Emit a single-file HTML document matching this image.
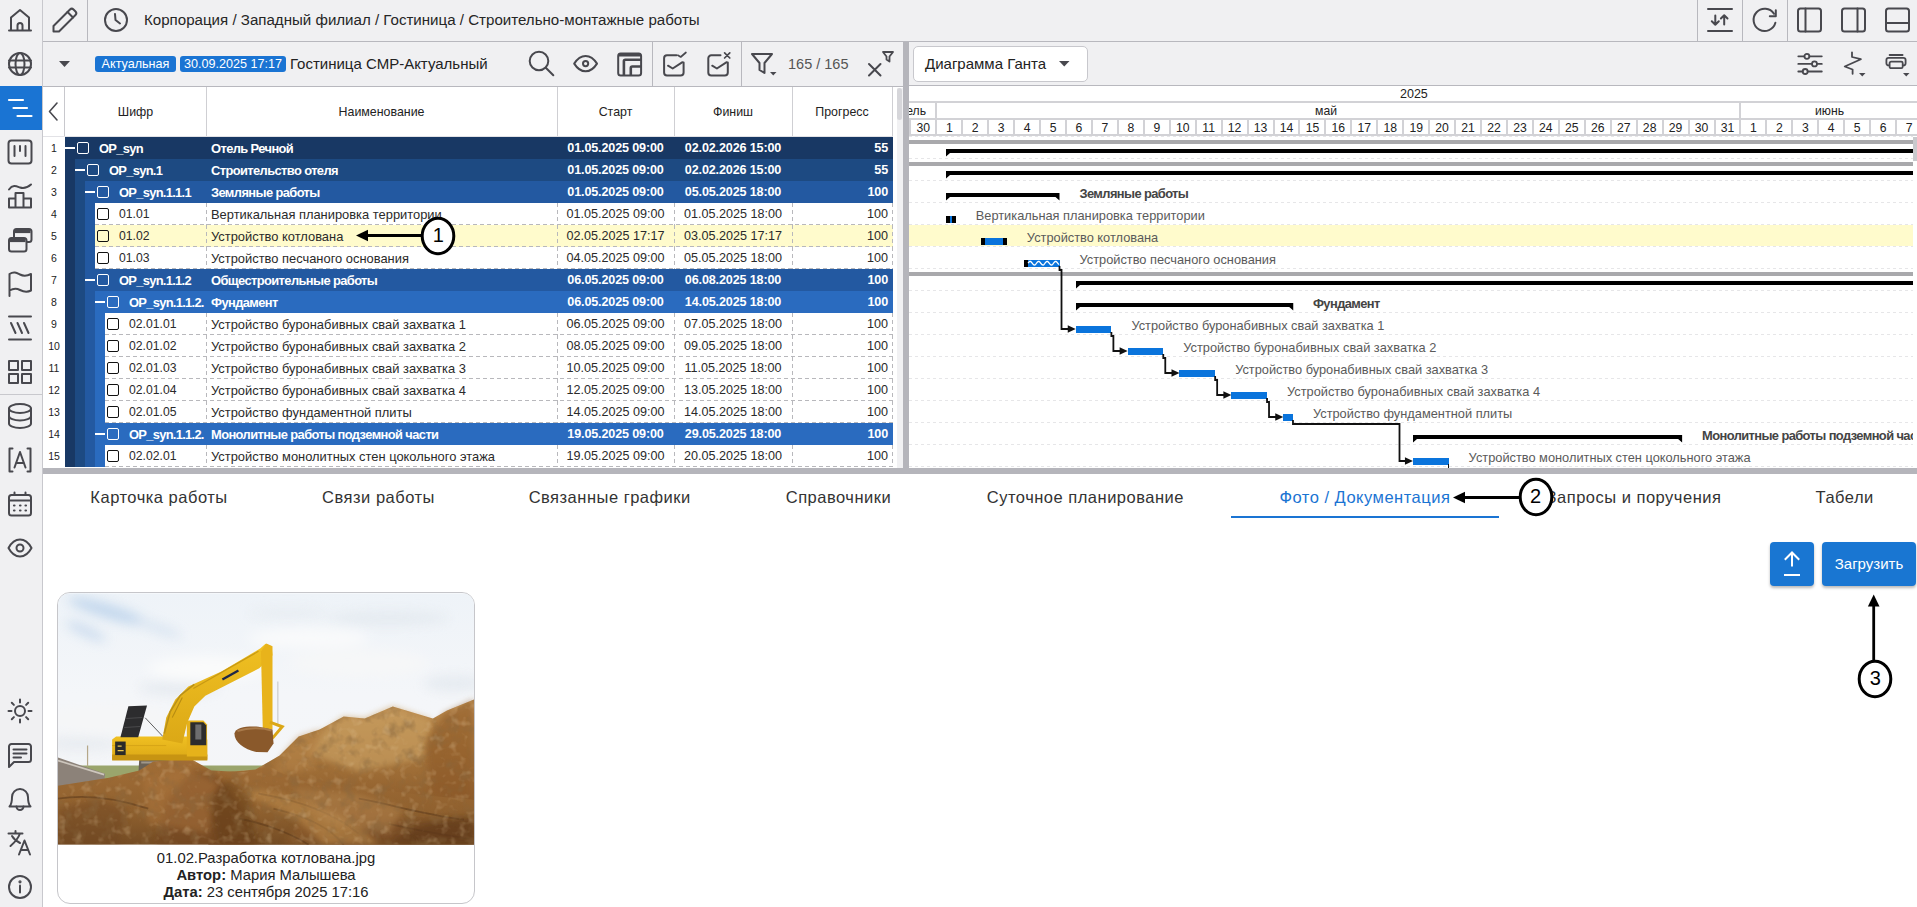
<!DOCTYPE html>
<html><head><meta charset="utf-8">
<style>
*{box-sizing:border-box;margin:0;padding:0}
html,body{width:1917px;height:907px;overflow:hidden;background:#fff;font-family:"Liberation Sans",sans-serif;color:#222}
.a{position:absolute}
svg{position:absolute;overflow:visible}
.ic{fill:none;stroke:#48484e;stroke-width:2;stroke-linecap:round;stroke-linejoin:round}
.t{position:absolute;white-space:nowrap}
</style></head><body>

<div class="a" style="left:0px;top:0px;width:42px;height:907px;background:#f0f0f2"></div>
<div class="a" style="left:42px;top:0px;width:1px;height:907px;background:#c8c8cd"></div>
<div class="a" style="left:0px;top:86px;width:42px;height:44px;background:#1a74d3"></div>
<div class="a" style="left:0px;top:394px;width:42px;height:1px;background:#c8c8cd"></div>
<svg class="ic" style="left:8px;top:8px;stroke:#48484e;stroke-width:2" width="24" height="24" viewBox="0 0 24 24"><path d="M1 22.5H23"/><path d="M3 22V9.5L12 2L21 9.5V22"/><path d="M9.5 22V17.5A2.5 2.5 0 0 1 14.5 17.5V22"/></svg>
<svg class="ic" style="left:8px;top:52px;stroke:#48484e;stroke-width:2" width="24" height="24" viewBox="0 0 24 24"><circle cx="12" cy="12" r="11"/><path d="M1 8.5H23M1 15.5H23"/><ellipse cx="12" cy="12" rx="4.5" ry="11"/></svg>
<svg class="ic" style="left:8px;top:96px;stroke:#fff;stroke-width:2.2" width="24" height="24" viewBox="0 0 24 24"><path d="M1 4H15M5.5 12H19M9.5 20H23.5"/></svg>
<svg class="ic" style="left:8px;top:140px;stroke:#48484e;stroke-width:2" width="24" height="24" viewBox="0 0 24 24"><rect x="0.5" y="0.5" width="23" height="23" rx="3"/><path d="M6.5 6V16M12 6V11M17.5 6V16"/></svg>
<svg class="ic" style="left:8px;top:184px;stroke:#48484e;stroke-width:2" width="24" height="24" viewBox="0 0 24 24"><path d="M1 5.5C5 0 9 2.5 12 3.5S19 4 23 0.5"/><path d="M1 23.5V14.5H7.5V23.5ZM7.5 23.5V9H15.5V23.5ZM15.5 23.5V14.5H23V23.5ZM1 23.5H23"/></svg>
<svg class="ic" style="left:8px;top:228px;stroke:#48484e;stroke-width:2" width="24" height="24" viewBox="0 0 24 24"><rect x="6" y="1" width="17.5" height="13" rx="2.5"/><path d="M7 3.5H22.5" style="stroke-width:3.2;stroke-linecap:butt"/><rect x="1" y="10" width="17.5" height="13.5" rx="2.5" style="fill:#f0f0f2"/><path d="M2 12.5H17.5" style="stroke-width:3.2;stroke-linecap:butt"/></svg>
<svg class="ic" style="left:8px;top:272px;stroke:#48484e;stroke-width:2" width="24" height="24" viewBox="0 0 24 24"><path d="M1.5 24V2C6 -1 9 1 12 2.5S19 4 23 2V18.5C19 20.5 15 19.5 12 18S6 16 1.5 18.5"/></svg>
<svg class="ic" style="left:8px;top:316px;stroke:#48484e;stroke-width:2" width="24" height="24" viewBox="0 0 24 24"><path d="M1 0.5H23M1 23.5H23M3 7L7.5 17M9.5 7L14 17M16 7L20.5 17"/></svg>
<svg class="ic" style="left:8px;top:360px;stroke:#48484e;stroke-width:2" width="24" height="24" viewBox="0 0 24 24"><rect x="1" y="1" width="9" height="9"/><rect x="14" y="1" width="9" height="9"/><rect x="1" y="14" width="9" height="9"/><rect x="14" y="14" width="9" height="9"/></svg>
<svg class="ic" style="left:8px;top:404px;stroke:#48484e;stroke-width:2" width="24" height="24" viewBox="0 0 24 24"><ellipse cx="12" cy="4.5" rx="11" ry="4.5"/><path d="M1 4.5V19.5C1 22 6 24 12 24S23 22 23 19.5V4.5M1 12C1 14.5 6 16.5 12 16.5S23 14.5 23 12"/></svg>
<svg class="ic" style="left:8px;top:448px;stroke:#48484e;stroke-width:2" width="24" height="24" viewBox="0 0 24 24"><path d="M4.5 0.5H1.5V23.5H4.5M19.5 0.5H22.5V23.5H19.5M6.5 19.5L12 4L17.5 19.5M8 15H16"/></svg>
<svg class="ic" style="left:8px;top:492px;stroke:#48484e;stroke-width:2" width="24" height="24" viewBox="0 0 24 24"><rect x="1" y="3" width="22" height="20.5" rx="2.5"/><path d="M1 8.5H23M6.5 0.5V3M17.5 0.5V3"/><path d="M6 13.5h0.5M12 13.5h0.5M17.5 13.5h0.5M6 18.5h0.5M12 18.5h0.5M17.5 18.5h0.5" style="stroke-width:2.2"/></svg>
<svg class="ic" style="left:8px;top:536px;stroke:#48484e;stroke-width:2" width="24" height="24" viewBox="0 0 24 24"><path d="M0.5 12C4 5.5 8 3.5 12 3.5S20 5.5 23.5 12C20 18.5 16 20.5 12 20.5S4 18.5 0.5 12Z"/><circle cx="12" cy="12" r="3.5"/></svg>
<svg class="ic" style="left:8px;top:699px;stroke:#48484e;stroke-width:2" width="24" height="24" viewBox="0 0 24 24"><circle cx="12" cy="12" r="5"/><path d="M12 0.5V3.5M12 20.5V23.5M0.5 12H3.5M20.5 12H23.5M3.8 3.8L5.9 5.9M18.1 18.1L20.2 20.2M3.8 20.2L5.9 18.1M18.1 5.9L20.2 3.8"/></svg>
<svg class="ic" style="left:8px;top:743px;stroke:#48484e;stroke-width:2" width="24" height="24" viewBox="0 0 24 24"><path d="M1 24V3.5A2.5 2.5 0 0 1 3.5 1H20.5A2.5 2.5 0 0 1 23 3.5V16.5A2.5 2.5 0 0 1 20.5 19H6Z"/><path d="M5.5 6.5H18.5M5.5 10.5H18.5M5.5 14.5H13"/></svg>
<svg class="ic" style="left:8px;top:787px;stroke:#48484e;stroke-width:2" width="24" height="24" viewBox="0 0 24 24"><path d="M1.5 19.5H22.5C20 17 20 14 20 10A8 8 0 0 0 4 10C4 14 4 17 1.5 19.5Z"/><path d="M8.5 19.5A3.5 3.5 0 0 0 15.5 19.5"/></svg>
<svg class="ic" style="left:8px;top:831px;stroke:#48484e;stroke-width:2" width="24" height="24" viewBox="0 0 24 24"><path d="M0.5 2.5H14.5M7.5 0V2.5M12 2.5C10 8 6 12 2.5 15M4 5C6 8.5 9 10.5 12 12M11 23.5L16.5 9.5L22 23.5M13 19H20"/></svg>
<svg class="ic" style="left:8px;top:875px;stroke:#48484e;stroke-width:2" width="24" height="24" viewBox="0 0 24 24"><circle cx="12" cy="12" r="11"/><path d="M12 10.5V17.5"/><circle cx="12" cy="6.8" r="0.6" style="fill:#48484e"/></svg>
<div class="a" style="left:43px;top:0px;width:1874px;height:41px;background:#f0f0f2"></div>
<div class="a" style="left:43px;top:41px;width:1874px;height:1px;background:#b8b8be"></div>
<div class="a" style="left:87px;top:0px;width:1px;height:41px;background:#b8b8be"></div>
<svg class="ic" style="left:52px;top:7px;" width="26" height="26" viewBox="0 0 26 26"><path d="M1.5 24.5V19L18 2.5A2.5 2.5 0 0 1 21.5 2.5L23.5 4.5A2.5 2.5 0 0 1 23.5 8L7 24.5Z"/><path d="M15.5 5L21 10.5"/></svg>
<svg class="ic" style="left:104px;top:8px;" width="24" height="24" viewBox="0 0 24 24"><circle cx="12" cy="12" r="11"/><path d="M11 6L11.5 12L16 15.5"/></svg>
<div class="t" style="left:144px;top:11px;font-size:15.1px;color:#262626;line-height:18px">Корпорация / Западный филиал / Гостиница / Строительно-монтажные работы</div>
<div class="a" style="left:1697px;top:0px;width:1px;height:41px;background:#b8b8be"></div>
<div class="a" style="left:1742px;top:0px;width:1px;height:41px;background:#b8b8be"></div>
<div class="a" style="left:1787px;top:0px;width:1px;height:41px;background:#b8b8be"></div>
<svg class="ic" style="left:1707px;top:8px;" width="26" height="24" viewBox="0 0 26 24"><path d="M1 1H25M1 23H25M8.3 7.5V16.8M4.8 13.3L8.3 16.8L11.8 13.3M17.2 16.6V7.2M13.9 10.5L17.2 7.2L20.5 10.5"/></svg>
<svg class="ic" style="left:1752px;top:7px;" width="26" height="26" viewBox="0 0 26 26"><path d="M23.4 15.8A11.1 11.1 0 1 1 22 6.8"/><path d="M23.8 3.2V9.2H17.8"/></svg>
<svg class="ic" style="left:1797px;top:8px;" width="25" height="24" viewBox="0 0 25 24"><rect x="1" y="0.5" width="23" height="23" rx="2.5"/><path d="M8.5 0.5V23.5"/></svg>
<svg class="ic" style="left:1841px;top:8px;" width="25" height="24" viewBox="0 0 25 24"><rect x="1" y="0.5" width="23" height="23" rx="2.5"/><path d="M16.5 0.5V23.5"/></svg>
<svg class="ic" style="left:1885px;top:8px;" width="25" height="24" viewBox="0 0 25 24"><rect x="1" y="0.5" width="23" height="23" rx="2.5"/><path d="M1 15H24"/></svg>
<div class="a" style="left:43px;top:42px;width:860px;height:44px;background:#f0f0f2"></div>
<div class="a" style="left:43px;top:86px;width:860px;height:1px;background:#b8b8be"></div>
<div class="a" style="left:652px;top:42px;width:1px;height:44px;background:#b8b8be"></div>
<div class="a" style="left:741px;top:42px;width:1px;height:44px;background:#b8b8be"></div>
<svg style="left:59px;top:61px" width="12" height="7" viewBox="0 0 12 7"><path d="M0 0H11L5.5 6Z" fill="#48484e"/></svg>
<div class="t" style="left:95px;top:56px;height:16px;width:81px;background:#1a74d3;border-radius:3px;color:#fff;font-size:12.6px;line-height:16px;text-align:center">Актуальная</div>
<div class="t" style="left:180px;top:56px;height:16px;width:106px;background:#1a74d3;border-radius:3px;color:#fff;font-size:12.6px;line-height:16px;text-align:center">30.09.2025 17:17</div>
<div class="t" style="left:290px;top:55px;font-size:15px;color:#222;line-height:18px">Гостиница СМР-Актуальный</div>
<svg class="ic" style="left:528px;top:50px;" width="27" height="27" viewBox="0 0 27 27"><circle cx="11" cy="11" r="9.3"/><path d="M17.8 17.8L25.3 25.3"/></svg>
<svg class="ic" style="left:573px;top:53px;" width="26" height="20" viewBox="0 0 26 20"><path d="M1.2 10.6C4.5 5.3 8.5 2.9 12.6 2.9S20.7 5.3 24 10.6C20.7 15.9 16.7 18.3 12.6 18.3S4.5 15.9 1.2 10.6Z"/><circle cx="12.6" cy="10.6" r="2.6"/></svg>
<svg class="ic" style="left:617px;top:52px;" width="26" height="25" viewBox="0 0 26 25"><rect x="1.2" y="1.5" width="22.9" height="22" rx="2.5"/><path d="M1.5 3H23.8" style="stroke-width:3;stroke-linecap:butt"/><path d="M6.9 23.5V9.2A1.5 1.5 0 0 1 8.4 7.7H24" style="stroke-width:2.6;stroke-linecap:butt"/><path d="M13.8 23.5V16A1.5 1.5 0 0 1 15.3 14.5H24" style="stroke-width:2.6;stroke-linecap:butt"/></svg>
<svg class="ic" style="left:663px;top:51px;" width="24" height="26" viewBox="0 0 24 26"><path d="M13.5 4.3H4A3 3 0 0 0 1.1 7.3V21.4A3 3 0 0 0 4 24.4H17.6A3 3 0 0 0 20.6 21.4V11.5"/><path d="M5 14.7L9.7 17.5L19.5 11.2"/><path d="M14.9 4.3L17.7 6L22.9 1.5" style="stroke-width:1.7"/></svg>
<svg class="ic" style="left:707px;top:51px;" width="25" height="26" viewBox="0 0 25 26"><path d="M13.5 4.3H4.3A3 3 0 0 0 1.3 7.3V21.4A3 3 0 0 0 4.3 24.4H17.8A3 3 0 0 0 20.8 21.4V11.5"/><path d="M5.2 14.7L9.9 17.5L19.7 11.2"/><path d="M17.6 1.8L22.8 7M22.8 1.8L17.6 7" style="stroke-width:1.7"/></svg>
<svg class="ic" style="left:751px;top:53px;" width="23" height="21" viewBox="0 0 23 21"><path d="M1 1H21L13.5 10V20L8.5 17V10Z"/></svg>
<svg style="left:770px;top:72px" width="7" height="4" viewBox="0 0 7 4"><path d="M0 0H6.5L3.25 3.5Z" fill="#48484e"/></svg>
<div class="t" style="left:788px;top:55px;font-size:14.5px;color:#555;line-height:18px">165 / 165</div>
<svg class="ic" style="left:868px;top:63px;" width="14" height="14" viewBox="0 0 14 14"><path d="M1 1L12.5 12.5M12.5 1L1 12.5"/></svg>
<svg class="ic" style="left:882px;top:51px;stroke-width:1.8" width="12" height="12" viewBox="0 0 12 12"><path d="M1 1H11L7.5 5.5V10.5L4.5 8.5V5.5Z"/></svg>
<div class="a" style="left:43px;top:87px;width:850px;height:50px;background:#fff"></div>
<div class="a" style="left:64px;top:87px;width:1px;height:50px;background:#c8c8cd"></div>
<div class="a" style="left:206px;top:87px;width:1px;height:50px;background:#cfcfd3"></div>
<div class="a" style="left:557px;top:87px;width:1px;height:50px;background:#cfcfd3"></div>
<div class="a" style="left:674px;top:87px;width:1px;height:50px;background:#cfcfd3"></div>
<div class="a" style="left:792px;top:87px;width:1px;height:50px;background:#cfcfd3"></div>
<div class="a" style="left:892px;top:87px;width:1px;height:50px;background:#cfcfd3"></div>
<div class="a" style="left:43px;top:136px;width:850px;height:1px;background:#e2e2e6"></div>
<svg class="ic" style="left:48px;top:102px;stroke-width:1.6" width="10" height="19" viewBox="0 0 10 19"><path d="M9 1L1.5 9.5L9 18"/></svg>
<div class="t" style="left:65px;top:105px;width:141px;font-size:12.4px;color:#222;line-height:14px;text-align:center">Шифр</div>
<div class="t" style="left:206px;top:105px;width:351px;font-size:12.4px;color:#222;line-height:14px;text-align:center">Наименование</div>
<div class="t" style="left:557px;top:105px;width:117px;font-size:12.4px;color:#222;line-height:14px;text-align:center">Старт</div>
<div class="t" style="left:674px;top:105px;width:118px;font-size:12.4px;color:#222;line-height:14px;text-align:center">Финиш</div>
<div class="t" style="left:792px;top:105px;width:100px;font-size:12.4px;color:#222;line-height:14px;text-align:center">Прогресс</div>
<div class="a" style="left:893px;top:87px;width:10px;height:381px;background:#fff"></div>
<div class="a" style="left:897px;top:88px;width:6px;height:380px;background:#f1f1f3"></div>
<div class="a" style="left:897px;top:88px;width:5px;height:32px;background:#d6d6da;border-radius:3px"></div>
<div class="a" style="left:43px;top:137px;width:22px;height:331px;background:#fff"></div>
<div class="t" style="left:43px;top:141px;width:22px;text-align:center;font-size:10.5px;color:#222;line-height:14px">1</div>
<div class="a" style="left:65px;top:137px;width:828px;height:22px;background:#183864"></div>
<div class="a" style="left:65px;top:147px;width:10px;height:2px;background:#fff"></div>
<div class="a" style="left:77px;top:142px;width:12px;height:12px;border:1.5px solid #fff;border-radius:2px"></div>
<div class="t" style="left:99px;top:141px;width:107px;overflow:hidden;font-size:12.9px;line-height:15px;color:#fff;font-weight:bold;letter-spacing:-0.7px">OP_syn</div>
<div class="t" style="left:211px;top:141px;font-size:12.9px;line-height:15px;color:#fff;font-weight:bold;letter-spacing:-0.6px;">Отель Речной</div>
<div class="t" style="left:557px;top:141px;width:117px;text-align:center;font-size:12.6px;line-height:15px;color:#fff;font-weight:bold;letter-spacing:-0.15px;">01.05.2025 09:00</div>
<div class="t" style="left:674px;top:141px;width:118px;text-align:center;font-size:12.6px;line-height:15px;color:#fff;font-weight:bold;letter-spacing:-0.15px;">02.02.2026 15:00</div>
<div class="t" style="left:792px;top:141px;width:96px;text-align:right;font-size:12.6px;line-height:15px;color:#fff;font-weight:bold;letter-spacing:-0.15px;">55</div>
<div class="t" style="left:43px;top:163px;width:22px;text-align:center;font-size:10.5px;color:#222;line-height:14px">2</div>
<div class="a" style="left:65px;top:159px;width:10px;height:22px;background:#183864"></div>
<div class="a" style="left:75px;top:159px;width:818px;height:22px;background:#1d4a82"></div>
<div class="a" style="left:75px;top:169px;width:10px;height:2px;background:#fff"></div>
<div class="a" style="left:87px;top:164px;width:12px;height:12px;border:1.5px solid #fff;border-radius:2px"></div>
<div class="t" style="left:109px;top:163px;width:97px;overflow:hidden;font-size:12.9px;line-height:15px;color:#fff;font-weight:bold;letter-spacing:-0.7px">OP_syn.1</div>
<div class="t" style="left:211px;top:163px;font-size:12.9px;line-height:15px;color:#fff;font-weight:bold;letter-spacing:-0.6px;">Строительство отеля</div>
<div class="t" style="left:557px;top:163px;width:117px;text-align:center;font-size:12.6px;line-height:15px;color:#fff;font-weight:bold;letter-spacing:-0.15px;">01.05.2025 09:00</div>
<div class="t" style="left:674px;top:163px;width:118px;text-align:center;font-size:12.6px;line-height:15px;color:#fff;font-weight:bold;letter-spacing:-0.15px;">02.02.2026 15:00</div>
<div class="t" style="left:792px;top:163px;width:96px;text-align:right;font-size:12.6px;line-height:15px;color:#fff;font-weight:bold;letter-spacing:-0.15px;">55</div>
<div class="t" style="left:43px;top:185px;width:22px;text-align:center;font-size:10.5px;color:#222;line-height:14px">3</div>
<div class="a" style="left:65px;top:181px;width:10px;height:22px;background:#183864"></div>
<div class="a" style="left:75px;top:181px;width:10px;height:22px;background:#1d4a82"></div>
<div class="a" style="left:85px;top:181px;width:808px;height:22px;background:#2359a1"></div>
<div class="a" style="left:85px;top:191px;width:10px;height:2px;background:#fff"></div>
<div class="a" style="left:97px;top:186px;width:12px;height:12px;border:1.5px solid #fff;border-radius:2px"></div>
<div class="t" style="left:119px;top:185px;width:87px;overflow:hidden;font-size:12.9px;line-height:15px;color:#fff;font-weight:bold;letter-spacing:-0.7px">OP_syn.1.1.1</div>
<div class="t" style="left:211px;top:185px;font-size:12.9px;line-height:15px;color:#fff;font-weight:bold;letter-spacing:-0.6px;">Земляные работы</div>
<div class="t" style="left:557px;top:185px;width:117px;text-align:center;font-size:12.6px;line-height:15px;color:#fff;font-weight:bold;letter-spacing:-0.15px;">01.05.2025 09:00</div>
<div class="t" style="left:674px;top:185px;width:118px;text-align:center;font-size:12.6px;line-height:15px;color:#fff;font-weight:bold;letter-spacing:-0.15px;">05.05.2025 18:00</div>
<div class="t" style="left:792px;top:185px;width:96px;text-align:right;font-size:12.6px;line-height:15px;color:#fff;font-weight:bold;letter-spacing:-0.15px;">100</div>
<div class="t" style="left:43px;top:207px;width:22px;text-align:center;font-size:10.5px;color:#222;line-height:14px">4</div>
<div class="a" style="left:65px;top:203px;width:10px;height:22px;background:#183864"></div>
<div class="a" style="left:75px;top:203px;width:10px;height:22px;background:#1d4a82"></div>
<div class="a" style="left:85px;top:203px;width:10px;height:22px;background:#2359a1"></div>
<div class="a" style="left:95px;top:203px;width:798px;height:22px;background:#fff"></div>
<div class="a" style="left:97px;top:208px;width:12px;height:12px;border:1.5px solid #111;border-radius:2px"></div>
<div class="a" style="left:95px;top:224px;width:797px;height:1px;background:repeating-linear-gradient(90deg,#b8b8bc 0 4px,transparent 4px 7px)"></div>
<div class="a" style="left:206px;top:203px;width:1px;height:22px;background:repeating-linear-gradient(180deg,#b8b8bc 0 4px,transparent 4px 7px)"></div>
<div class="a" style="left:557px;top:203px;width:1px;height:22px;background:repeating-linear-gradient(180deg,#b8b8bc 0 4px,transparent 4px 7px)"></div>
<div class="a" style="left:674px;top:203px;width:1px;height:22px;background:repeating-linear-gradient(180deg,#b8b8bc 0 4px,transparent 4px 7px)"></div>
<div class="a" style="left:792px;top:203px;width:1px;height:22px;background:repeating-linear-gradient(180deg,#b8b8bc 0 4px,transparent 4px 7px)"></div>
<div class="a" style="left:892px;top:203px;width:1px;height:22px;background:repeating-linear-gradient(180deg,#b8b8bc 0 4px,transparent 4px 7px)"></div>
<div class="t" style="left:119px;top:207px;font-size:12.2px;line-height:15px;color:#2a2a2a">01.01</div>
<div class="t" style="left:211px;top:207px;font-size:12.9px;line-height:15px;color:#2a2a2a;font-weight:normal;">Вертикальная планировка территории</div>
<div class="t" style="left:557px;top:207px;width:117px;text-align:center;font-size:12.6px;line-height:15px;color:#2a2a2a;font-weight:normal;">01.05.2025 09:00</div>
<div class="t" style="left:674px;top:207px;width:118px;text-align:center;font-size:12.6px;line-height:15px;color:#2a2a2a;font-weight:normal;">01.05.2025 18:00</div>
<div class="t" style="left:792px;top:207px;width:96px;text-align:right;font-size:12.6px;line-height:15px;color:#2a2a2a;font-weight:normal;">100</div>
<div class="t" style="left:43px;top:229px;width:22px;text-align:center;font-size:10.5px;color:#222;line-height:14px">5</div>
<div class="a" style="left:65px;top:225px;width:10px;height:22px;background:#183864"></div>
<div class="a" style="left:75px;top:225px;width:10px;height:22px;background:#1d4a82"></div>
<div class="a" style="left:85px;top:225px;width:10px;height:22px;background:#2359a1"></div>
<div class="a" style="left:95px;top:225px;width:798px;height:22px;background:#fffbcc"></div>
<div class="a" style="left:97px;top:230px;width:12px;height:12px;border:1.5px solid #111;border-radius:2px"></div>
<div class="a" style="left:95px;top:246px;width:797px;height:1px;background:repeating-linear-gradient(90deg,#b8b8bc 0 4px,transparent 4px 7px)"></div>
<div class="a" style="left:206px;top:225px;width:1px;height:22px;background:repeating-linear-gradient(180deg,#b8b8bc 0 4px,transparent 4px 7px)"></div>
<div class="a" style="left:557px;top:225px;width:1px;height:22px;background:repeating-linear-gradient(180deg,#b8b8bc 0 4px,transparent 4px 7px)"></div>
<div class="a" style="left:674px;top:225px;width:1px;height:22px;background:repeating-linear-gradient(180deg,#b8b8bc 0 4px,transparent 4px 7px)"></div>
<div class="a" style="left:792px;top:225px;width:1px;height:22px;background:repeating-linear-gradient(180deg,#b8b8bc 0 4px,transparent 4px 7px)"></div>
<div class="a" style="left:892px;top:225px;width:1px;height:22px;background:repeating-linear-gradient(180deg,#b8b8bc 0 4px,transparent 4px 7px)"></div>
<div class="t" style="left:119px;top:229px;font-size:12.2px;line-height:15px;color:#2a2a2a">01.02</div>
<div class="t" style="left:211px;top:229px;font-size:12.9px;line-height:15px;color:#2a2a2a;font-weight:normal;">Устройство котлована</div>
<div class="t" style="left:557px;top:229px;width:117px;text-align:center;font-size:12.6px;line-height:15px;color:#2a2a2a;font-weight:normal;">02.05.2025 17:17</div>
<div class="t" style="left:674px;top:229px;width:118px;text-align:center;font-size:12.6px;line-height:15px;color:#2a2a2a;font-weight:normal;">03.05.2025 17:17</div>
<div class="t" style="left:792px;top:229px;width:96px;text-align:right;font-size:12.6px;line-height:15px;color:#2a2a2a;font-weight:normal;">100</div>
<div class="t" style="left:43px;top:251px;width:22px;text-align:center;font-size:10.5px;color:#222;line-height:14px">6</div>
<div class="a" style="left:65px;top:247px;width:10px;height:22px;background:#183864"></div>
<div class="a" style="left:75px;top:247px;width:10px;height:22px;background:#1d4a82"></div>
<div class="a" style="left:85px;top:247px;width:10px;height:22px;background:#2359a1"></div>
<div class="a" style="left:95px;top:247px;width:798px;height:22px;background:#fff"></div>
<div class="a" style="left:97px;top:252px;width:12px;height:12px;border:1.5px solid #111;border-radius:2px"></div>
<div class="a" style="left:95px;top:268px;width:797px;height:1px;background:repeating-linear-gradient(90deg,#b8b8bc 0 4px,transparent 4px 7px)"></div>
<div class="a" style="left:206px;top:247px;width:1px;height:22px;background:repeating-linear-gradient(180deg,#b8b8bc 0 4px,transparent 4px 7px)"></div>
<div class="a" style="left:557px;top:247px;width:1px;height:22px;background:repeating-linear-gradient(180deg,#b8b8bc 0 4px,transparent 4px 7px)"></div>
<div class="a" style="left:674px;top:247px;width:1px;height:22px;background:repeating-linear-gradient(180deg,#b8b8bc 0 4px,transparent 4px 7px)"></div>
<div class="a" style="left:792px;top:247px;width:1px;height:22px;background:repeating-linear-gradient(180deg,#b8b8bc 0 4px,transparent 4px 7px)"></div>
<div class="a" style="left:892px;top:247px;width:1px;height:22px;background:repeating-linear-gradient(180deg,#b8b8bc 0 4px,transparent 4px 7px)"></div>
<div class="t" style="left:119px;top:251px;font-size:12.2px;line-height:15px;color:#2a2a2a">01.03</div>
<div class="t" style="left:211px;top:251px;font-size:12.9px;line-height:15px;color:#2a2a2a;font-weight:normal;">Устройство песчаного основания</div>
<div class="t" style="left:557px;top:251px;width:117px;text-align:center;font-size:12.6px;line-height:15px;color:#2a2a2a;font-weight:normal;">04.05.2025 09:00</div>
<div class="t" style="left:674px;top:251px;width:118px;text-align:center;font-size:12.6px;line-height:15px;color:#2a2a2a;font-weight:normal;">05.05.2025 18:00</div>
<div class="t" style="left:792px;top:251px;width:96px;text-align:right;font-size:12.6px;line-height:15px;color:#2a2a2a;font-weight:normal;">100</div>
<div class="t" style="left:43px;top:273px;width:22px;text-align:center;font-size:10.5px;color:#222;line-height:14px">7</div>
<div class="a" style="left:65px;top:269px;width:10px;height:22px;background:#183864"></div>
<div class="a" style="left:75px;top:269px;width:10px;height:22px;background:#1d4a82"></div>
<div class="a" style="left:85px;top:269px;width:808px;height:22px;background:#2359a1"></div>
<div class="a" style="left:85px;top:279px;width:10px;height:2px;background:#fff"></div>
<div class="a" style="left:97px;top:274px;width:12px;height:12px;border:1.5px solid #fff;border-radius:2px"></div>
<div class="t" style="left:119px;top:273px;width:87px;overflow:hidden;font-size:12.9px;line-height:15px;color:#fff;font-weight:bold;letter-spacing:-0.7px">OP_syn.1.1.2</div>
<div class="t" style="left:211px;top:273px;font-size:12.9px;line-height:15px;color:#fff;font-weight:bold;letter-spacing:-0.6px;">Общестроительные работы</div>
<div class="t" style="left:557px;top:273px;width:117px;text-align:center;font-size:12.6px;line-height:15px;color:#fff;font-weight:bold;letter-spacing:-0.15px;">06.05.2025 09:00</div>
<div class="t" style="left:674px;top:273px;width:118px;text-align:center;font-size:12.6px;line-height:15px;color:#fff;font-weight:bold;letter-spacing:-0.15px;">06.08.2025 18:00</div>
<div class="t" style="left:792px;top:273px;width:96px;text-align:right;font-size:12.6px;line-height:15px;color:#fff;font-weight:bold;letter-spacing:-0.15px;">100</div>
<div class="t" style="left:43px;top:295px;width:22px;text-align:center;font-size:10.5px;color:#222;line-height:14px">8</div>
<div class="a" style="left:65px;top:291px;width:10px;height:22px;background:#183864"></div>
<div class="a" style="left:75px;top:291px;width:10px;height:22px;background:#1d4a82"></div>
<div class="a" style="left:85px;top:291px;width:10px;height:22px;background:#2359a1"></div>
<div class="a" style="left:95px;top:291px;width:798px;height:22px;background:#2a6bbf"></div>
<div class="a" style="left:95px;top:301px;width:10px;height:2px;background:#fff"></div>
<div class="a" style="left:107px;top:296px;width:12px;height:12px;border:1.5px solid #fff;border-radius:2px"></div>
<div class="t" style="left:129px;top:295px;width:77px;overflow:hidden;font-size:12.9px;line-height:15px;color:#fff;font-weight:bold;letter-spacing:-0.7px">OP_syn.1.1.2.</div>
<div class="t" style="left:211px;top:295px;font-size:12.9px;line-height:15px;color:#fff;font-weight:bold;letter-spacing:-0.6px;">Фундамент</div>
<div class="t" style="left:557px;top:295px;width:117px;text-align:center;font-size:12.6px;line-height:15px;color:#fff;font-weight:bold;letter-spacing:-0.15px;">06.05.2025 09:00</div>
<div class="t" style="left:674px;top:295px;width:118px;text-align:center;font-size:12.6px;line-height:15px;color:#fff;font-weight:bold;letter-spacing:-0.15px;">14.05.2025 18:00</div>
<div class="t" style="left:792px;top:295px;width:96px;text-align:right;font-size:12.6px;line-height:15px;color:#fff;font-weight:bold;letter-spacing:-0.15px;">100</div>
<div class="t" style="left:43px;top:317px;width:22px;text-align:center;font-size:10.5px;color:#222;line-height:14px">9</div>
<div class="a" style="left:65px;top:313px;width:10px;height:22px;background:#183864"></div>
<div class="a" style="left:75px;top:313px;width:10px;height:22px;background:#1d4a82"></div>
<div class="a" style="left:85px;top:313px;width:10px;height:22px;background:#2359a1"></div>
<div class="a" style="left:95px;top:313px;width:10px;height:22px;background:#2a6bbf"></div>
<div class="a" style="left:105px;top:313px;width:788px;height:22px;background:#fff"></div>
<div class="a" style="left:107px;top:318px;width:12px;height:12px;border:1.5px solid #111;border-radius:2px"></div>
<div class="a" style="left:105px;top:334px;width:787px;height:1px;background:repeating-linear-gradient(90deg,#b8b8bc 0 4px,transparent 4px 7px)"></div>
<div class="a" style="left:206px;top:313px;width:1px;height:22px;background:repeating-linear-gradient(180deg,#b8b8bc 0 4px,transparent 4px 7px)"></div>
<div class="a" style="left:557px;top:313px;width:1px;height:22px;background:repeating-linear-gradient(180deg,#b8b8bc 0 4px,transparent 4px 7px)"></div>
<div class="a" style="left:674px;top:313px;width:1px;height:22px;background:repeating-linear-gradient(180deg,#b8b8bc 0 4px,transparent 4px 7px)"></div>
<div class="a" style="left:792px;top:313px;width:1px;height:22px;background:repeating-linear-gradient(180deg,#b8b8bc 0 4px,transparent 4px 7px)"></div>
<div class="a" style="left:892px;top:313px;width:1px;height:22px;background:repeating-linear-gradient(180deg,#b8b8bc 0 4px,transparent 4px 7px)"></div>
<div class="t" style="left:129px;top:317px;font-size:12.2px;line-height:15px;color:#2a2a2a">02.01.01</div>
<div class="t" style="left:211px;top:317px;font-size:12.9px;line-height:15px;color:#2a2a2a;font-weight:normal;">Устройство буронабивных свай захватка 1</div>
<div class="t" style="left:557px;top:317px;width:117px;text-align:center;font-size:12.6px;line-height:15px;color:#2a2a2a;font-weight:normal;">06.05.2025 09:00</div>
<div class="t" style="left:674px;top:317px;width:118px;text-align:center;font-size:12.6px;line-height:15px;color:#2a2a2a;font-weight:normal;">07.05.2025 18:00</div>
<div class="t" style="left:792px;top:317px;width:96px;text-align:right;font-size:12.6px;line-height:15px;color:#2a2a2a;font-weight:normal;">100</div>
<div class="t" style="left:43px;top:339px;width:22px;text-align:center;font-size:10.5px;color:#222;line-height:14px">10</div>
<div class="a" style="left:65px;top:335px;width:10px;height:22px;background:#183864"></div>
<div class="a" style="left:75px;top:335px;width:10px;height:22px;background:#1d4a82"></div>
<div class="a" style="left:85px;top:335px;width:10px;height:22px;background:#2359a1"></div>
<div class="a" style="left:95px;top:335px;width:10px;height:22px;background:#2a6bbf"></div>
<div class="a" style="left:105px;top:335px;width:788px;height:22px;background:#fff"></div>
<div class="a" style="left:107px;top:340px;width:12px;height:12px;border:1.5px solid #111;border-radius:2px"></div>
<div class="a" style="left:105px;top:356px;width:787px;height:1px;background:repeating-linear-gradient(90deg,#b8b8bc 0 4px,transparent 4px 7px)"></div>
<div class="a" style="left:206px;top:335px;width:1px;height:22px;background:repeating-linear-gradient(180deg,#b8b8bc 0 4px,transparent 4px 7px)"></div>
<div class="a" style="left:557px;top:335px;width:1px;height:22px;background:repeating-linear-gradient(180deg,#b8b8bc 0 4px,transparent 4px 7px)"></div>
<div class="a" style="left:674px;top:335px;width:1px;height:22px;background:repeating-linear-gradient(180deg,#b8b8bc 0 4px,transparent 4px 7px)"></div>
<div class="a" style="left:792px;top:335px;width:1px;height:22px;background:repeating-linear-gradient(180deg,#b8b8bc 0 4px,transparent 4px 7px)"></div>
<div class="a" style="left:892px;top:335px;width:1px;height:22px;background:repeating-linear-gradient(180deg,#b8b8bc 0 4px,transparent 4px 7px)"></div>
<div class="t" style="left:129px;top:339px;font-size:12.2px;line-height:15px;color:#2a2a2a">02.01.02</div>
<div class="t" style="left:211px;top:339px;font-size:12.9px;line-height:15px;color:#2a2a2a;font-weight:normal;">Устройство буронабивных свай захватка 2</div>
<div class="t" style="left:557px;top:339px;width:117px;text-align:center;font-size:12.6px;line-height:15px;color:#2a2a2a;font-weight:normal;">08.05.2025 09:00</div>
<div class="t" style="left:674px;top:339px;width:118px;text-align:center;font-size:12.6px;line-height:15px;color:#2a2a2a;font-weight:normal;">09.05.2025 18:00</div>
<div class="t" style="left:792px;top:339px;width:96px;text-align:right;font-size:12.6px;line-height:15px;color:#2a2a2a;font-weight:normal;">100</div>
<div class="t" style="left:43px;top:361px;width:22px;text-align:center;font-size:10.5px;color:#222;line-height:14px">11</div>
<div class="a" style="left:65px;top:357px;width:10px;height:22px;background:#183864"></div>
<div class="a" style="left:75px;top:357px;width:10px;height:22px;background:#1d4a82"></div>
<div class="a" style="left:85px;top:357px;width:10px;height:22px;background:#2359a1"></div>
<div class="a" style="left:95px;top:357px;width:10px;height:22px;background:#2a6bbf"></div>
<div class="a" style="left:105px;top:357px;width:788px;height:22px;background:#fff"></div>
<div class="a" style="left:107px;top:362px;width:12px;height:12px;border:1.5px solid #111;border-radius:2px"></div>
<div class="a" style="left:105px;top:378px;width:787px;height:1px;background:repeating-linear-gradient(90deg,#b8b8bc 0 4px,transparent 4px 7px)"></div>
<div class="a" style="left:206px;top:357px;width:1px;height:22px;background:repeating-linear-gradient(180deg,#b8b8bc 0 4px,transparent 4px 7px)"></div>
<div class="a" style="left:557px;top:357px;width:1px;height:22px;background:repeating-linear-gradient(180deg,#b8b8bc 0 4px,transparent 4px 7px)"></div>
<div class="a" style="left:674px;top:357px;width:1px;height:22px;background:repeating-linear-gradient(180deg,#b8b8bc 0 4px,transparent 4px 7px)"></div>
<div class="a" style="left:792px;top:357px;width:1px;height:22px;background:repeating-linear-gradient(180deg,#b8b8bc 0 4px,transparent 4px 7px)"></div>
<div class="a" style="left:892px;top:357px;width:1px;height:22px;background:repeating-linear-gradient(180deg,#b8b8bc 0 4px,transparent 4px 7px)"></div>
<div class="t" style="left:129px;top:361px;font-size:12.2px;line-height:15px;color:#2a2a2a">02.01.03</div>
<div class="t" style="left:211px;top:361px;font-size:12.9px;line-height:15px;color:#2a2a2a;font-weight:normal;">Устройство буронабивных свай захватка 3</div>
<div class="t" style="left:557px;top:361px;width:117px;text-align:center;font-size:12.6px;line-height:15px;color:#2a2a2a;font-weight:normal;">10.05.2025 09:00</div>
<div class="t" style="left:674px;top:361px;width:118px;text-align:center;font-size:12.6px;line-height:15px;color:#2a2a2a;font-weight:normal;">11.05.2025 18:00</div>
<div class="t" style="left:792px;top:361px;width:96px;text-align:right;font-size:12.6px;line-height:15px;color:#2a2a2a;font-weight:normal;">100</div>
<div class="t" style="left:43px;top:383px;width:22px;text-align:center;font-size:10.5px;color:#222;line-height:14px">12</div>
<div class="a" style="left:65px;top:379px;width:10px;height:22px;background:#183864"></div>
<div class="a" style="left:75px;top:379px;width:10px;height:22px;background:#1d4a82"></div>
<div class="a" style="left:85px;top:379px;width:10px;height:22px;background:#2359a1"></div>
<div class="a" style="left:95px;top:379px;width:10px;height:22px;background:#2a6bbf"></div>
<div class="a" style="left:105px;top:379px;width:788px;height:22px;background:#fff"></div>
<div class="a" style="left:107px;top:384px;width:12px;height:12px;border:1.5px solid #111;border-radius:2px"></div>
<div class="a" style="left:105px;top:400px;width:787px;height:1px;background:repeating-linear-gradient(90deg,#b8b8bc 0 4px,transparent 4px 7px)"></div>
<div class="a" style="left:206px;top:379px;width:1px;height:22px;background:repeating-linear-gradient(180deg,#b8b8bc 0 4px,transparent 4px 7px)"></div>
<div class="a" style="left:557px;top:379px;width:1px;height:22px;background:repeating-linear-gradient(180deg,#b8b8bc 0 4px,transparent 4px 7px)"></div>
<div class="a" style="left:674px;top:379px;width:1px;height:22px;background:repeating-linear-gradient(180deg,#b8b8bc 0 4px,transparent 4px 7px)"></div>
<div class="a" style="left:792px;top:379px;width:1px;height:22px;background:repeating-linear-gradient(180deg,#b8b8bc 0 4px,transparent 4px 7px)"></div>
<div class="a" style="left:892px;top:379px;width:1px;height:22px;background:repeating-linear-gradient(180deg,#b8b8bc 0 4px,transparent 4px 7px)"></div>
<div class="t" style="left:129px;top:383px;font-size:12.2px;line-height:15px;color:#2a2a2a">02.01.04</div>
<div class="t" style="left:211px;top:383px;font-size:12.9px;line-height:15px;color:#2a2a2a;font-weight:normal;">Устройство буронабивных свай захватка 4</div>
<div class="t" style="left:557px;top:383px;width:117px;text-align:center;font-size:12.6px;line-height:15px;color:#2a2a2a;font-weight:normal;">12.05.2025 09:00</div>
<div class="t" style="left:674px;top:383px;width:118px;text-align:center;font-size:12.6px;line-height:15px;color:#2a2a2a;font-weight:normal;">13.05.2025 18:00</div>
<div class="t" style="left:792px;top:383px;width:96px;text-align:right;font-size:12.6px;line-height:15px;color:#2a2a2a;font-weight:normal;">100</div>
<div class="t" style="left:43px;top:405px;width:22px;text-align:center;font-size:10.5px;color:#222;line-height:14px">13</div>
<div class="a" style="left:65px;top:401px;width:10px;height:22px;background:#183864"></div>
<div class="a" style="left:75px;top:401px;width:10px;height:22px;background:#1d4a82"></div>
<div class="a" style="left:85px;top:401px;width:10px;height:22px;background:#2359a1"></div>
<div class="a" style="left:95px;top:401px;width:10px;height:22px;background:#2a6bbf"></div>
<div class="a" style="left:105px;top:401px;width:788px;height:22px;background:#fff"></div>
<div class="a" style="left:107px;top:406px;width:12px;height:12px;border:1.5px solid #111;border-radius:2px"></div>
<div class="a" style="left:105px;top:422px;width:787px;height:1px;background:repeating-linear-gradient(90deg,#b8b8bc 0 4px,transparent 4px 7px)"></div>
<div class="a" style="left:206px;top:401px;width:1px;height:22px;background:repeating-linear-gradient(180deg,#b8b8bc 0 4px,transparent 4px 7px)"></div>
<div class="a" style="left:557px;top:401px;width:1px;height:22px;background:repeating-linear-gradient(180deg,#b8b8bc 0 4px,transparent 4px 7px)"></div>
<div class="a" style="left:674px;top:401px;width:1px;height:22px;background:repeating-linear-gradient(180deg,#b8b8bc 0 4px,transparent 4px 7px)"></div>
<div class="a" style="left:792px;top:401px;width:1px;height:22px;background:repeating-linear-gradient(180deg,#b8b8bc 0 4px,transparent 4px 7px)"></div>
<div class="a" style="left:892px;top:401px;width:1px;height:22px;background:repeating-linear-gradient(180deg,#b8b8bc 0 4px,transparent 4px 7px)"></div>
<div class="t" style="left:129px;top:405px;font-size:12.2px;line-height:15px;color:#2a2a2a">02.01.05</div>
<div class="t" style="left:211px;top:405px;font-size:12.9px;line-height:15px;color:#2a2a2a;font-weight:normal;">Устройство фундаментной плиты</div>
<div class="t" style="left:557px;top:405px;width:117px;text-align:center;font-size:12.6px;line-height:15px;color:#2a2a2a;font-weight:normal;">14.05.2025 09:00</div>
<div class="t" style="left:674px;top:405px;width:118px;text-align:center;font-size:12.6px;line-height:15px;color:#2a2a2a;font-weight:normal;">14.05.2025 18:00</div>
<div class="t" style="left:792px;top:405px;width:96px;text-align:right;font-size:12.6px;line-height:15px;color:#2a2a2a;font-weight:normal;">100</div>
<div class="t" style="left:43px;top:427px;width:22px;text-align:center;font-size:10.5px;color:#222;line-height:14px">14</div>
<div class="a" style="left:65px;top:423px;width:10px;height:22px;background:#183864"></div>
<div class="a" style="left:75px;top:423px;width:10px;height:22px;background:#1d4a82"></div>
<div class="a" style="left:85px;top:423px;width:10px;height:22px;background:#2359a1"></div>
<div class="a" style="left:95px;top:423px;width:798px;height:22px;background:#2a6bbf"></div>
<div class="a" style="left:95px;top:433px;width:10px;height:2px;background:#fff"></div>
<div class="a" style="left:107px;top:428px;width:12px;height:12px;border:1.5px solid #fff;border-radius:2px"></div>
<div class="t" style="left:129px;top:427px;width:77px;overflow:hidden;font-size:12.9px;line-height:15px;color:#fff;font-weight:bold;letter-spacing:-0.7px">OP_syn.1.1.2.</div>
<div class="t" style="left:211px;top:427px;font-size:12.9px;line-height:15px;color:#fff;font-weight:bold;letter-spacing:-0.6px;">Монолитные работы подземной части</div>
<div class="t" style="left:557px;top:427px;width:117px;text-align:center;font-size:12.6px;line-height:15px;color:#fff;font-weight:bold;letter-spacing:-0.15px;">19.05.2025 09:00</div>
<div class="t" style="left:674px;top:427px;width:118px;text-align:center;font-size:12.6px;line-height:15px;color:#fff;font-weight:bold;letter-spacing:-0.15px;">29.05.2025 18:00</div>
<div class="t" style="left:792px;top:427px;width:96px;text-align:right;font-size:12.6px;line-height:15px;color:#fff;font-weight:bold;letter-spacing:-0.15px;">100</div>
<div class="t" style="left:43px;top:449px;width:22px;text-align:center;font-size:10.5px;color:#222;line-height:14px">15</div>
<div class="a" style="left:65px;top:445px;width:10px;height:22px;background:#183864"></div>
<div class="a" style="left:75px;top:445px;width:10px;height:22px;background:#1d4a82"></div>
<div class="a" style="left:85px;top:445px;width:10px;height:22px;background:#2359a1"></div>
<div class="a" style="left:95px;top:445px;width:10px;height:22px;background:#2a6bbf"></div>
<div class="a" style="left:105px;top:445px;width:788px;height:22px;background:#fff"></div>
<div class="a" style="left:107px;top:450px;width:12px;height:12px;border:1.5px solid #111;border-radius:2px"></div>
<div class="a" style="left:105px;top:466px;width:787px;height:1px;background:repeating-linear-gradient(90deg,#b8b8bc 0 4px,transparent 4px 7px)"></div>
<div class="a" style="left:206px;top:445px;width:1px;height:22px;background:repeating-linear-gradient(180deg,#b8b8bc 0 4px,transparent 4px 7px)"></div>
<div class="a" style="left:557px;top:445px;width:1px;height:22px;background:repeating-linear-gradient(180deg,#b8b8bc 0 4px,transparent 4px 7px)"></div>
<div class="a" style="left:674px;top:445px;width:1px;height:22px;background:repeating-linear-gradient(180deg,#b8b8bc 0 4px,transparent 4px 7px)"></div>
<div class="a" style="left:792px;top:445px;width:1px;height:22px;background:repeating-linear-gradient(180deg,#b8b8bc 0 4px,transparent 4px 7px)"></div>
<div class="a" style="left:892px;top:445px;width:1px;height:22px;background:repeating-linear-gradient(180deg,#b8b8bc 0 4px,transparent 4px 7px)"></div>
<div class="t" style="left:129px;top:449px;font-size:12.2px;line-height:15px;color:#2a2a2a">02.02.01</div>
<div class="t" style="left:211px;top:449px;font-size:12.9px;line-height:15px;color:#2a2a2a;font-weight:normal;">Устройство монолитных стен цокольного этажа</div>
<div class="t" style="left:557px;top:449px;width:117px;text-align:center;font-size:12.6px;line-height:15px;color:#2a2a2a;font-weight:normal;">19.05.2025 09:00</div>
<div class="t" style="left:674px;top:449px;width:118px;text-align:center;font-size:12.6px;line-height:15px;color:#2a2a2a;font-weight:normal;">20.05.2025 18:00</div>
<div class="t" style="left:792px;top:449px;width:96px;text-align:right;font-size:12.6px;line-height:15px;color:#2a2a2a;font-weight:normal;">100</div>
<div class="a" style="left:909px;top:42px;width:1008px;height:43px;background:#f0f0f2"></div>
<div class="a" style="left:909px;top:85px;width:1008px;height:1px;background:#b8b8be"></div>
<div class="a" style="left:913px;top:46px;width:175px;height:36px;background:#fff;border:1px solid #c8c8cd;border-radius:5px"></div>
<div class="t" style="left:925px;top:55px;font-size:15px;color:#222;line-height:18px">Диаграмма Ганта</div>
<svg style="left:1059px;top:61px" width="11" height="6" viewBox="0 0 11 6"><path d="M0 0H10.5L5.25 5.5Z" fill="#48484e"/></svg>
<svg class="ic" style="left:1797px;top:53px;stroke-width:1.8" width="26" height="23" viewBox="0 0 26 23"><path d="M1.3 3.3H7.4M12.4 3.3H24.8M1.3 10.9H15M20 10.9H24.8M1.3 18.5H5.7M10.7 18.5H24.8"/><circle cx="9.9" cy="3.3" r="2.5"/><circle cx="17.5" cy="10.9" r="2.5"/><circle cx="8.2" cy="18.5" r="2.5"/></svg>
<svg class="ic" style="left:1843px;top:51px;stroke-width:1.8" width="20" height="24" viewBox="0 0 20 24"><path d="M9 1.3V6L17.9 8.2L1.7 15.5L9.6 18.5V22.8"/></svg>
<svg style="left:1859px;top:73px" width="7" height="4" viewBox="0 0 7 4"><path d="M0 0H6.5L3.25 3.5Z" fill="#48484e"/></svg>
<svg class="ic" style="left:1885px;top:53px;stroke-width:1.8" width="22" height="18" viewBox="0 0 22 18"><path d="M4.6 2H17.6"/><rect x="1.4" y="4.8" width="19.2" height="7.6" rx="2.2"/><rect x="4.6" y="8.6" width="13.1" height="6.6" rx="1.5" style="fill:#f0f0f2"/></svg>
<svg style="left:1903px;top:73px" width="7" height="4" viewBox="0 0 7 4"><path d="M0 0H6.5L3.25 3.5Z" fill="#48484e"/></svg>
<div class="a" style="left:909px;top:86px;width:1008px;height:382px;background:#fff;overflow:hidden"></div>
<div class="a" style="left:909px;top:86px;width:1004px;height:382px;overflow:hidden">
</div><div class="a" style="left:909px;top:86px;width:1008px;height:51px;overflow:hidden">
<div class="a" style="left:0.00px;top:15.00px;width:1008.00px;height:2.00px;background:#d2d2d6"></div>
<div class="a" style="left:0.00px;top:32.00px;width:1008.00px;height:2.00px;background:#d2d2d6"></div>
<div class="a" style="left:0.00px;top:48.00px;width:1008.00px;height:2.00px;background:#d2d2d6"></div>
<div class="a" style="left:26.30px;top:16.00px;width:2.00px;height:17.00px;background:#d2d2d6"></div>
<div class="a" style="left:830.44px;top:16.00px;width:2.00px;height:17.00px;background:#d2d2d6"></div>
<div class="a" style="left:0.36px;top:33.00px;width:2.00px;height:16.00px;background:#d2d2d6"></div>
<div class="t" style="left:1.36px;top:35px;width:25.94px;text-align:center;font-size:12.2px;color:#222;line-height:14px">30</div>
<div class="a" style="left:26.30px;top:33.00px;width:2.00px;height:16.00px;background:#d2d2d6"></div>
<div class="t" style="left:27.30px;top:35px;width:25.94px;text-align:center;font-size:12.2px;color:#222;line-height:14px">1</div>
<div class="a" style="left:52.24px;top:33.00px;width:2.00px;height:16.00px;background:#d2d2d6"></div>
<div class="t" style="left:53.24px;top:35px;width:25.94px;text-align:center;font-size:12.2px;color:#222;line-height:14px">2</div>
<div class="a" style="left:78.18px;top:33.00px;width:2.00px;height:16.00px;background:#d2d2d6"></div>
<div class="t" style="left:79.18px;top:35px;width:25.94px;text-align:center;font-size:12.2px;color:#222;line-height:14px">3</div>
<div class="a" style="left:104.12px;top:33.00px;width:2.00px;height:16.00px;background:#d2d2d6"></div>
<div class="t" style="left:105.12px;top:35px;width:25.94px;text-align:center;font-size:12.2px;color:#222;line-height:14px">4</div>
<div class="a" style="left:130.06px;top:33.00px;width:2.00px;height:16.00px;background:#d2d2d6"></div>
<div class="t" style="left:131.06px;top:35px;width:25.94px;text-align:center;font-size:12.2px;color:#222;line-height:14px">5</div>
<div class="a" style="left:156.00px;top:33.00px;width:2.00px;height:16.00px;background:#d2d2d6"></div>
<div class="t" style="left:157.00px;top:35px;width:25.94px;text-align:center;font-size:12.2px;color:#222;line-height:14px">6</div>
<div class="a" style="left:181.94px;top:33.00px;width:2.00px;height:16.00px;background:#d2d2d6"></div>
<div class="t" style="left:182.94px;top:35px;width:25.94px;text-align:center;font-size:12.2px;color:#222;line-height:14px">7</div>
<div class="a" style="left:207.88px;top:33.00px;width:2.00px;height:16.00px;background:#d2d2d6"></div>
<div class="t" style="left:208.88px;top:35px;width:25.94px;text-align:center;font-size:12.2px;color:#222;line-height:14px">8</div>
<div class="a" style="left:233.82px;top:33.00px;width:2.00px;height:16.00px;background:#d2d2d6"></div>
<div class="t" style="left:234.82px;top:35px;width:25.94px;text-align:center;font-size:12.2px;color:#222;line-height:14px">9</div>
<div class="a" style="left:259.76px;top:33.00px;width:2.00px;height:16.00px;background:#d2d2d6"></div>
<div class="t" style="left:260.76px;top:35px;width:25.94px;text-align:center;font-size:12.2px;color:#222;line-height:14px">10</div>
<div class="a" style="left:285.70px;top:33.00px;width:2.00px;height:16.00px;background:#d2d2d6"></div>
<div class="t" style="left:286.70px;top:35px;width:25.94px;text-align:center;font-size:12.2px;color:#222;line-height:14px">11</div>
<div class="a" style="left:311.64px;top:33.00px;width:2.00px;height:16.00px;background:#d2d2d6"></div>
<div class="t" style="left:312.64px;top:35px;width:25.94px;text-align:center;font-size:12.2px;color:#222;line-height:14px">12</div>
<div class="a" style="left:337.58px;top:33.00px;width:2.00px;height:16.00px;background:#d2d2d6"></div>
<div class="t" style="left:338.58px;top:35px;width:25.94px;text-align:center;font-size:12.2px;color:#222;line-height:14px">13</div>
<div class="a" style="left:363.52px;top:33.00px;width:2.00px;height:16.00px;background:#d2d2d6"></div>
<div class="t" style="left:364.52px;top:35px;width:25.94px;text-align:center;font-size:12.2px;color:#222;line-height:14px">14</div>
<div class="a" style="left:389.46px;top:33.00px;width:2.00px;height:16.00px;background:#d2d2d6"></div>
<div class="t" style="left:390.46px;top:35px;width:25.94px;text-align:center;font-size:12.2px;color:#222;line-height:14px">15</div>
<div class="a" style="left:415.40px;top:33.00px;width:2.00px;height:16.00px;background:#d2d2d6"></div>
<div class="t" style="left:416.40px;top:35px;width:25.94px;text-align:center;font-size:12.2px;color:#222;line-height:14px">16</div>
<div class="a" style="left:441.34px;top:33.00px;width:2.00px;height:16.00px;background:#d2d2d6"></div>
<div class="t" style="left:442.34px;top:35px;width:25.94px;text-align:center;font-size:12.2px;color:#222;line-height:14px">17</div>
<div class="a" style="left:467.28px;top:33.00px;width:2.00px;height:16.00px;background:#d2d2d6"></div>
<div class="t" style="left:468.28px;top:35px;width:25.94px;text-align:center;font-size:12.2px;color:#222;line-height:14px">18</div>
<div class="a" style="left:493.22px;top:33.00px;width:2.00px;height:16.00px;background:#d2d2d6"></div>
<div class="t" style="left:494.22px;top:35px;width:25.94px;text-align:center;font-size:12.2px;color:#222;line-height:14px">19</div>
<div class="a" style="left:519.16px;top:33.00px;width:2.00px;height:16.00px;background:#d2d2d6"></div>
<div class="t" style="left:520.16px;top:35px;width:25.94px;text-align:center;font-size:12.2px;color:#222;line-height:14px">20</div>
<div class="a" style="left:545.10px;top:33.00px;width:2.00px;height:16.00px;background:#d2d2d6"></div>
<div class="t" style="left:546.10px;top:35px;width:25.94px;text-align:center;font-size:12.2px;color:#222;line-height:14px">21</div>
<div class="a" style="left:571.04px;top:33.00px;width:2.00px;height:16.00px;background:#d2d2d6"></div>
<div class="t" style="left:572.04px;top:35px;width:25.94px;text-align:center;font-size:12.2px;color:#222;line-height:14px">22</div>
<div class="a" style="left:596.98px;top:33.00px;width:2.00px;height:16.00px;background:#d2d2d6"></div>
<div class="t" style="left:597.98px;top:35px;width:25.94px;text-align:center;font-size:12.2px;color:#222;line-height:14px">23</div>
<div class="a" style="left:622.92px;top:33.00px;width:2.00px;height:16.00px;background:#d2d2d6"></div>
<div class="t" style="left:623.92px;top:35px;width:25.94px;text-align:center;font-size:12.2px;color:#222;line-height:14px">24</div>
<div class="a" style="left:648.86px;top:33.00px;width:2.00px;height:16.00px;background:#d2d2d6"></div>
<div class="t" style="left:649.86px;top:35px;width:25.94px;text-align:center;font-size:12.2px;color:#222;line-height:14px">25</div>
<div class="a" style="left:674.80px;top:33.00px;width:2.00px;height:16.00px;background:#d2d2d6"></div>
<div class="t" style="left:675.80px;top:35px;width:25.94px;text-align:center;font-size:12.2px;color:#222;line-height:14px">26</div>
<div class="a" style="left:700.74px;top:33.00px;width:2.00px;height:16.00px;background:#d2d2d6"></div>
<div class="t" style="left:701.74px;top:35px;width:25.94px;text-align:center;font-size:12.2px;color:#222;line-height:14px">27</div>
<div class="a" style="left:726.68px;top:33.00px;width:2.00px;height:16.00px;background:#d2d2d6"></div>
<div class="t" style="left:727.68px;top:35px;width:25.94px;text-align:center;font-size:12.2px;color:#222;line-height:14px">28</div>
<div class="a" style="left:752.62px;top:33.00px;width:2.00px;height:16.00px;background:#d2d2d6"></div>
<div class="t" style="left:753.62px;top:35px;width:25.94px;text-align:center;font-size:12.2px;color:#222;line-height:14px">29</div>
<div class="a" style="left:778.56px;top:33.00px;width:2.00px;height:16.00px;background:#d2d2d6"></div>
<div class="t" style="left:779.56px;top:35px;width:25.94px;text-align:center;font-size:12.2px;color:#222;line-height:14px">30</div>
<div class="a" style="left:804.50px;top:33.00px;width:2.00px;height:16.00px;background:#d2d2d6"></div>
<div class="t" style="left:805.50px;top:35px;width:25.94px;text-align:center;font-size:12.2px;color:#222;line-height:14px">31</div>
<div class="a" style="left:830.44px;top:33.00px;width:2.00px;height:16.00px;background:#d2d2d6"></div>
<div class="t" style="left:831.44px;top:35px;width:25.94px;text-align:center;font-size:12.2px;color:#222;line-height:14px">1</div>
<div class="a" style="left:856.38px;top:33.00px;width:2.00px;height:16.00px;background:#d2d2d6"></div>
<div class="t" style="left:857.38px;top:35px;width:25.94px;text-align:center;font-size:12.2px;color:#222;line-height:14px">2</div>
<div class="a" style="left:882.32px;top:33.00px;width:2.00px;height:16.00px;background:#d2d2d6"></div>
<div class="t" style="left:883.32px;top:35px;width:25.94px;text-align:center;font-size:12.2px;color:#222;line-height:14px">3</div>
<div class="a" style="left:908.26px;top:33.00px;width:2.00px;height:16.00px;background:#d2d2d6"></div>
<div class="t" style="left:909.26px;top:35px;width:25.94px;text-align:center;font-size:12.2px;color:#222;line-height:14px">4</div>
<div class="a" style="left:934.20px;top:33.00px;width:2.00px;height:16.00px;background:#d2d2d6"></div>
<div class="t" style="left:935.20px;top:35px;width:25.94px;text-align:center;font-size:12.2px;color:#222;line-height:14px">5</div>
<div class="a" style="left:960.14px;top:33.00px;width:2.00px;height:16.00px;background:#d2d2d6"></div>
<div class="t" style="left:961.14px;top:35px;width:25.94px;text-align:center;font-size:12.2px;color:#222;line-height:14px">6</div>
<div class="a" style="left:986.08px;top:33.00px;width:2.00px;height:16.00px;background:#d2d2d6"></div>
<div class="t" style="left:987.08px;top:35px;width:25.94px;text-align:center;font-size:12.2px;color:#222;line-height:14px">7</div>
<div class="a" style="left:1012.02px;top:33.00px;width:2.00px;height:16.00px;background:#d2d2d6"></div>
<div class="t" style="left:1013.02px;top:35px;width:25.94px;text-align:center;font-size:12.2px;color:#222;line-height:14px">8</div>
<div class="t" style="left:491.00px;top:1.00px;font-size:12.5px;color:#222;line-height:14px">2025</div>
<div class="t" style="left:406.00px;top:18.00px;font-size:12.2px;color:#222;line-height:14px">май</div>
<div class="t" style="left:906.00px;top:18.00px;font-size:12.2px;color:#222;line-height:14px">июнь</div>
<div class="t" style="left:-23.00px;top:18.00px;font-size:12.2px;color:#222;line-height:14px">апрель</div>
</div><div class="a" style="left:909px;top:86px;width:1004px;height:382px;overflow:hidden">
<div class="a" style="left:0.00px;top:50.00px;width:1004.00px;height:1.00px;background:repeating-linear-gradient(90deg,#e6e6e8 0 3px,transparent 3px 6px)"></div>
<div class="a" style="left:0.00px;top:72.00px;width:1004.00px;height:1.00px;background:repeating-linear-gradient(90deg,#e6e6e8 0 3px,transparent 3px 6px)"></div>
<div class="a" style="left:0.00px;top:94.00px;width:1004.00px;height:1.00px;background:repeating-linear-gradient(90deg,#e6e6e8 0 3px,transparent 3px 6px)"></div>
<div class="a" style="left:0.00px;top:116.00px;width:1004.00px;height:1.00px;background:repeating-linear-gradient(90deg,#e6e6e8 0 3px,transparent 3px 6px)"></div>
<div class="a" style="left:0.00px;top:138.00px;width:1004.00px;height:1.00px;background:repeating-linear-gradient(90deg,#e6e6e8 0 3px,transparent 3px 6px)"></div>
<div class="a" style="left:0.00px;top:160.00px;width:1004.00px;height:1.00px;background:repeating-linear-gradient(90deg,#e6e6e8 0 3px,transparent 3px 6px)"></div>
<div class="a" style="left:0.00px;top:182.00px;width:1004.00px;height:1.00px;background:repeating-linear-gradient(90deg,#e6e6e8 0 3px,transparent 3px 6px)"></div>
<div class="a" style="left:0.00px;top:204.00px;width:1004.00px;height:1.00px;background:repeating-linear-gradient(90deg,#e6e6e8 0 3px,transparent 3px 6px)"></div>
<div class="a" style="left:0.00px;top:226.00px;width:1004.00px;height:1.00px;background:repeating-linear-gradient(90deg,#e6e6e8 0 3px,transparent 3px 6px)"></div>
<div class="a" style="left:0.00px;top:248.00px;width:1004.00px;height:1.00px;background:repeating-linear-gradient(90deg,#e6e6e8 0 3px,transparent 3px 6px)"></div>
<div class="a" style="left:0.00px;top:270.00px;width:1004.00px;height:1.00px;background:repeating-linear-gradient(90deg,#e6e6e8 0 3px,transparent 3px 6px)"></div>
<div class="a" style="left:0.00px;top:292.00px;width:1004.00px;height:1.00px;background:repeating-linear-gradient(90deg,#e6e6e8 0 3px,transparent 3px 6px)"></div>
<div class="a" style="left:0.00px;top:314.00px;width:1004.00px;height:1.00px;background:repeating-linear-gradient(90deg,#e6e6e8 0 3px,transparent 3px 6px)"></div>
<div class="a" style="left:0.00px;top:336.00px;width:1004.00px;height:1.00px;background:repeating-linear-gradient(90deg,#e6e6e8 0 3px,transparent 3px 6px)"></div>
<div class="a" style="left:0.00px;top:358.00px;width:1004.00px;height:1.00px;background:repeating-linear-gradient(90deg,#e6e6e8 0 3px,transparent 3px 6px)"></div>
<div class="a" style="left:0.00px;top:380.00px;width:1004.00px;height:1.00px;background:repeating-linear-gradient(90deg,#e6e6e8 0 3px,transparent 3px 6px)"></div>
<div class="a" style="left:0.00px;top:139.00px;width:1004.00px;height:21.00px;background:#fffbcc"></div>
<div class="a" style="left:0.00px;top:54.00px;width:1004.00px;height:4.00px;background:#a9a9ac"></div>
<div class="a" style="left:0.00px;top:76.00px;width:1004.00px;height:4.00px;background:#a9a9ac"></div>
<div class="a" style="left:0.00px;top:186.00px;width:1004.00px;height:4.00px;background:#a9a9ac"></div>
<svg style="left:37.03px;top:63px" width="7772.27" height="8" viewBox="0 0 7772.27 8"><path d="M0 0H7772.27V7.5L7768.27 4H4L0 7.5Z" fill="#000"/></svg>
<svg style="left:37.03px;top:85px" width="7772.27" height="8" viewBox="0 0 7772.27 8"><path d="M0 0H7772.27V7.5L7768.27 4H4L0 7.5Z" fill="#000"/></svg>
<svg style="left:37.03px;top:107px" width="113.49" height="8" viewBox="0 0 113.49 8"><path d="M0 0H113.49V7.5L109.49 4H4L0 7.5Z" fill="#000"/></svg>
<div class="t" style="left:170.51px;top:100.00px;font-size:12.9px;line-height:15px;color:#444;font-weight:bold;letter-spacing:-0.6px">Земляные работы</div>
<div class="a" style="left:37.03px;top:130.00px;width:9.73px;height:6.50px;background:#0a74dc"></div>
<div class="a" style="left:37.03px;top:130.00px;width:4.00px;height:6.50px;background:#000"></div>
<div class="a" style="left:42.75px;top:130.00px;width:4.00px;height:6.50px;background:#000"></div>
<div class="t" style="left:66.75px;top:122.00px;font-size:12.8px;line-height:15px;color:#5a5a5a">Вертикальная планировка территории</div>
<div class="a" style="left:71.92px;top:152.00px;width:25.94px;height:6.50px;background:#0a74dc"></div>
<div class="a" style="left:71.92px;top:152.00px;width:4.00px;height:6.50px;background:#000"></div>
<div class="a" style="left:93.86px;top:152.00px;width:4.00px;height:6.50px;background:#000"></div>
<div class="t" style="left:117.86px;top:144.00px;font-size:12.8px;line-height:15px;color:#5a5a5a">Устройство котлована</div>
<div class="a" style="left:114.85px;top:174.00px;width:35.67px;height:6.50px;background:#0a74dc"></div>
<div class="a" style="left:114.85px;top:174.00px;width:4.00px;height:6.50px;background:#000"></div>
<svg style="left:114.85px;top:174px" width="35.67" height="7"><polyline points="4.0,3.20 4.5,2.55 5.0,1.99 5.5,1.59 6.0,1.41 6.5,1.47 7.0,1.76 7.5,2.25 8.0,2.87 8.5,3.53 9.0,4.15 9.5,4.64 10.0,4.93 10.5,4.99 11.0,4.81 11.5,4.41 12.0,3.85 12.5,3.20 13.0,2.55 13.5,1.99 14.0,1.59 14.5,1.41 15.0,1.47 15.5,1.76 16.0,2.25 16.5,2.87 17.0,3.53 17.5,4.15 18.0,4.64 18.5,4.93 19.0,4.99 19.5,4.81 20.0,4.41 20.5,3.85 21.0,3.20 21.5,2.55 22.0,1.99 22.5,1.59 23.0,1.41 23.5,1.47 24.0,1.76 24.5,2.25 25.0,2.87 25.5,3.53 26.0,4.15 26.5,4.64 27.0,4.93 27.5,4.99 28.0,4.81 28.5,4.41 29.0,3.85 29.5,3.20 30.0,2.55 30.5,1.99 31.0,1.59 31.5,1.41 32.0,1.47 32.5,1.76 33.0,2.25 33.5,2.87 34.0,3.53 34.5,4.15 35.0,4.64" fill="none" stroke="#fff" stroke-width="1.3"/></svg>
<div class="t" style="left:170.51px;top:166.00px;font-size:12.8px;line-height:15px;color:#5a5a5a">Устройство песчаного основания</div>
<svg style="left:166.73px;top:195px" width="7642.57" height="8" viewBox="0 0 7642.57 8"><path d="M0 0H7642.57V7.5L7638.57 4H4L0 7.5Z" fill="#000"/></svg>
<svg style="left:166.73px;top:217px" width="217.25" height="8" viewBox="0 0 217.25 8"><path d="M0 0H217.25V7.5L213.25 4H4L0 7.5Z" fill="#000"/></svg>
<div class="t" style="left:403.97px;top:210.00px;font-size:12.9px;line-height:15px;color:#444;font-weight:bold;letter-spacing:-0.6px">Фундамент</div>
<div class="a" style="left:166.73px;top:240.00px;width:35.67px;height:6.50px;background:#0a74dc"></div>
<div class="t" style="left:222.39px;top:232.00px;font-size:12.8px;line-height:15px;color:#5a5a5a">Устройство буронабивных свай захватка 1</div>
<div class="a" style="left:218.61px;top:262.00px;width:35.67px;height:6.50px;background:#0a74dc"></div>
<div class="t" style="left:274.28px;top:254.00px;font-size:12.8px;line-height:15px;color:#5a5a5a">Устройство буронабивных свай захватка 2</div>
<div class="a" style="left:270.49px;top:284.00px;width:35.67px;height:6.50px;background:#0a74dc"></div>
<div class="t" style="left:326.15px;top:276.00px;font-size:12.8px;line-height:15px;color:#5a5a5a">Устройство буронабивных свай захватка 3</div>
<div class="a" style="left:322.37px;top:306.00px;width:35.67px;height:6.50px;background:#0a74dc"></div>
<div class="t" style="left:378.03px;top:298.00px;font-size:12.8px;line-height:15px;color:#5a5a5a">Устройство буронабивных свай захватка 4</div>
<div class="a" style="left:374.25px;top:328.00px;width:9.73px;height:6.50px;background:#0a74dc"></div>
<div class="t" style="left:403.97px;top:320.00px;font-size:12.8px;line-height:15px;color:#5a5a5a">Устройство фундаментной плиты</div>
<svg style="left:503.95px;top:349px" width="269.13" height="8" viewBox="0 0 269.13 8"><path d="M0 0H269.13V7.5L265.13 4H4L0 7.5Z" fill="#000"/></svg>
<div class="t" style="left:793.08px;top:342.00px;font-size:12.9px;line-height:15px;color:#444;font-weight:bold;letter-spacing:-0.6px">Монолитные работы подземной части</div>
<div class="a" style="left:503.95px;top:372.00px;width:35.67px;height:6.50px;background:#0a74dc"></div>
<div class="t" style="left:559.62px;top:364.00px;font-size:12.8px;line-height:15px;color:#5a5a5a">Устройство монолитных стен цокольного этажа</div>
<svg style="left:0;top:0" width="1004" height="382"><path d="M150.51 180.00V184.00H152.51V243.00H159.73" fill="none" stroke="#111" stroke-width="1.8"/><path d="M158.73 239.20L166.73 243.00L158.73 246.80Z" fill="#111"/></svg>
<svg style="left:0;top:0" width="1004" height="382"><path d="M202.39 246.00V250.00H204.39V265.00H211.61" fill="none" stroke="#111" stroke-width="1.8"/><path d="M210.61 261.20L218.61 265.00L210.61 268.80Z" fill="#111"/></svg>
<svg style="left:0;top:0" width="1004" height="382"><path d="M254.28 268.00V272.00H256.28V287.00H263.49" fill="none" stroke="#111" stroke-width="1.8"/><path d="M262.49 283.20L270.49 287.00L262.49 290.80Z" fill="#111"/></svg>
<svg style="left:0;top:0" width="1004" height="382"><path d="M306.15 290.00V294.00H308.15V309.00H315.37" fill="none" stroke="#111" stroke-width="1.8"/><path d="M314.37 305.20L322.37 309.00L314.37 312.80Z" fill="#111"/></svg>
<svg style="left:0;top:0" width="1004" height="382"><path d="M358.03 312.00V316.00H360.03V331.00H367.25" fill="none" stroke="#111" stroke-width="1.8"/><path d="M366.25 327.20L374.25 331.00L366.25 334.80Z" fill="#111"/></svg>
<svg style="left:0;top:0" width="1004" height="382"><path d="M383.97 334.00V338.00H490.50V375.00H496.95" fill="none" stroke="#111" stroke-width="1.8"/><path d="M495.95 371.20L503.95 375.00L495.95 378.80Z" fill="#111"/></svg>
<div class="a" style="left:538.62px;top:378.00px;width:1.80px;height:10.00px;background:#111"></div>
</div>
<div class="a" style="left:1913px;top:137px;width:4px;height:331px;background:#fff"></div>
<div class="a" style="left:1913px;top:137px;width:4px;height:24px;background:#c9c9cd"></div>
<div class="a" style="left:903px;top:42px;width:6px;height:426px;background:#b5b5bb"></div>
<div class="a" style="left:43px;top:468px;width:1874px;height:6px;background:#b5b5bb"></div>
<div class="t" style="left:9.0px;top:488px;width:300px;text-align:center;font-size:16.5px;letter-spacing:0.5px;line-height:19px;color:#333">Карточка работы</div>
<div class="t" style="left:228.5px;top:488px;width:300px;text-align:center;font-size:16.5px;letter-spacing:0.5px;line-height:19px;color:#333">Связи работы</div>
<div class="t" style="left:459.7px;top:488px;width:300px;text-align:center;font-size:16.5px;letter-spacing:0.5px;line-height:19px;color:#333">Связанные графики</div>
<div class="t" style="left:688.5px;top:488px;width:300px;text-align:center;font-size:16.5px;letter-spacing:0.5px;line-height:19px;color:#333">Справочники</div>
<div class="t" style="left:935.4px;top:488px;width:300px;text-align:center;font-size:16.5px;letter-spacing:0.5px;line-height:19px;color:#333">Суточное планирование</div>
<div class="t" style="left:1214.9px;top:488px;width:300px;text-align:center;font-size:16.5px;letter-spacing:0.5px;line-height:19px;color:#1a74d3">Фото / Документация</div>
<div class="t" style="left:1484.0px;top:488px;width:300px;text-align:center;font-size:16.5px;letter-spacing:0.5px;line-height:19px;color:#333">Запросы и поручения</div>
<div class="t" style="left:1694.7px;top:488px;width:300px;text-align:center;font-size:16.5px;letter-spacing:0.5px;line-height:19px;color:#333">Табели</div>
<div class="a" style="left:1231px;top:516px;width:268px;height:2px;background:#1a74d3"></div>
<div class="a" style="left:1770px;top:542px;width:44px;height:44px;background:#1976d2;border-radius:4px;box-shadow:0 2px 3px rgba(0,0,0,0.28)"></div>
<svg style="left:1770px;top:542px" width="44" height="44" viewBox="0 0 44 44"><path d="M22 24.5V10.5M14.8 17.7L22 10.5L29.2 17.7M14 33H30" fill="none" stroke="#fff" stroke-width="2"/></svg>
<div class="a" style="left:1822px;top:542px;width:94px;height:44px;background:#1976d2;border-radius:4px;box-shadow:0 2px 3px rgba(0,0,0,0.28)"></div>
<div class="t" style="left:1822px;top:555px;width:94px;text-align:center;font-size:15px;line-height:18px;color:#fff">Загрузить</div>
<div class="a" style="left:57px;top:592px;width:417.5px;height:311.5px;border:1px solid #c6c6ca;border-radius:13px;overflow:hidden;background:#fff">
<svg style="left:0;top:0" width="416" height="252" viewBox="0 0 415 251">
<defs>
<linearGradient id="sky" x1="0" y1="0" x2="0" y2="1"><stop offset="0" stop-color="#eef3f8"/><stop offset="0.4" stop-color="#f4f6f9"/><stop offset="1" stop-color="#f4f5f7"/></linearGradient>
<linearGradient id="mound" x1="0" y1="0" x2="0" y2="1"><stop offset="0" stop-color="#bf8f52"/><stop offset="0.3" stop-color="#ab7a3f"/><stop offset="0.65" stop-color="#93622f"/><stop offset="1" stop-color="#65421f"/></linearGradient>
<linearGradient id="fg" x1="0" y1="0" x2="0" y2="1"><stop offset="0" stop-color="#a26e37"/><stop offset="0.6" stop-color="#90612f"/><stop offset="1" stop-color="#744c24"/></linearGradient>
<linearGradient id="yel" x1="0" y1="0" x2="0" y2="1"><stop offset="0" stop-color="#f0c022"/><stop offset="1" stop-color="#dba816"/></linearGradient>
<filter id="bl" x="-50%" y="-50%" width="200%" height="200%"><feGaussianBlur stdDeviation="6"/></filter>
<filter id="bl2" x="-50%" y="-50%" width="200%" height="200%"><feGaussianBlur stdDeviation="3"/></filter>
<filter id="noise" x="0" y="0" width="100%" height="100%"><feTurbulence type="fractalNoise" baseFrequency="0.07" numOctaves="3" seed="5"/><feColorMatrix values="0 0 0 0 0.25  0 0 0 0 0.14  0 0 0 0 0.05  0 0 0 -3 1.55"/><feComposite in2="SourceGraphic" operator="in"/></filter>
<filter id="noise2" x="0" y="0" width="100%" height="100%"><feTurbulence type="fractalNoise" baseFrequency="0.12" numOctaves="2" seed="11"/><feColorMatrix values="0 0 0 0 0.80  0 0 0 0 0.60  0 0 0 0 0.36  0 0 0 3 -1.6"/><feComposite in2="SourceGraphic" operator="in"/></filter>
<clipPath id="cimg"><rect width="415" height="251"/></clipPath>
<clipPath id="cdirt"><path d="M150 180L197 176L221 162L240 143L261 136L285 123L306 125L334 113L374 125L388 117L415 106V251H0V192L51 184L81 177L95 168L132 165L153 177L187 178.5L208 174Z"/></clipPath>
</defs><g clip-path="url(#cimg)">
<rect width="415" height="251" fill="url(#sky)"/>
<g filter="url(#bl)" opacity="0.8">
<ellipse cx="50" cy="18" rx="42" ry="7" fill="#b8d0ea" transform="rotate(17 50 18)"/>
<ellipse cx="28" cy="38" rx="22" ry="5" fill="#c2d6ec" transform="rotate(25 28 38)"/>
<ellipse cx="100" cy="35" rx="25" ry="4" fill="#cfdeee" transform="rotate(20 100 35)"/>
<ellipse cx="330" cy="25" rx="60" ry="7" fill="#e2e8ee"/><ellipse cx="230" cy="20" rx="40" ry="5" fill="#e6ebf0"/><ellipse cx="120" cy="95" rx="40" ry="7" fill="#e3e8ee"/><ellipse cx="390" cy="150" rx="30" ry="8" fill="#e4e9ef"/><ellipse cx="20" cy="150" rx="40" ry="8" fill="#e6eaef"/>
<ellipse cx="395" cy="90" rx="30" ry="8" fill="#e2e8ee"/>
</g>
<g filter="url(#bl)" opacity="1">
<ellipse cx="150" cy="75" rx="60" ry="12" fill="#fafbfb"/><ellipse cx="250" cy="45" rx="60" ry="10" fill="#f9fafb"/>
<ellipse cx="300" cy="70" rx="70" ry="14" fill="#f6f7f8"/>
<ellipse cx="50" cy="125" rx="60" ry="14" fill="#f5f6f7"/>
<ellipse cx="290" cy="150" rx="50" ry="14" fill="#f6f7f8"/>
</g>
<!-- green field -->
<path d="M22 172H232V186H22Z" fill="#9aa56c"/>
<path d="M0 172H22V182H0Z" fill="#b0b392"/>
<path d="M29.5 152V173" stroke="#b5a789" stroke-width="1.2"/>
<!-- left metal structure -->
<path d="M0 164L47 180L46 188L0 196Z" fill="#8c8279"/>
<path d="M0 167L46 181" stroke="#cdc6bd" stroke-width="1.6"/>
<!-- right mound -->
<path d="M150 180L197 176L221 162L240 143L261 136L285 123L306 125L334 113L374 125L388 117L415 106V251H150Z" fill="url(#mound)"/>
<path d="M262 140L285 123L306 125L334 113L372 126L365 165L300 178L250 160Z" fill="#c9a063" opacity="0.65" filter="url(#bl2)"/><path d="M225 160L240 143L262 136L255 175L215 180Z" fill="#b8864c" opacity="0.5" filter="url(#bl2)"/>
<path d="M385 120L415 106V215L372 200L366 150Z" fill="#8a5728" opacity="0.55" filter="url(#bl2)"/>
<!-- undercarriage -->
<path d="M81 166H134L136 184H80Z" fill="#6a6155"/>
<path d="M83 169H132" stroke="#a0978a" stroke-width="2"/>
<!-- foreground dirt -->
<path d="M0 192L51 184L81 177L95 168L132 165L153 177L187 178.5L208 174L230 182L270 190L320 196L370 202L415 206V251H0Z" fill="url(#fg)"/>
<path d="M98 251L108 208L135 176L160 182L182 212L196 251Z" fill="#744620" opacity="0.65" filter="url(#bl2)"/>
<path d="M225 251L250 215L300 205L340 220L352 251Z" fill="#925f2e" opacity="0.5" filter="url(#bl2)"/>
<path d="M0 215L40 205L70 215L60 251H0Z" fill="#6e4420" opacity="0.45" filter="url(#bl2)"/><path d="M85 185L130 175L160 190L150 240L90 230Z" fill="#b07840" opacity="0.45" filter="url(#bl2)"/>
<path d="M200 200C230 205 270 215 300 240M215 215C245 222 270 232 285 251M300 205C330 210 360 220 405 226M330 230C350 235 380 240 410 245M180 225C200 228 230 238 250 251M0 205C30 200 60 205 90 215" stroke="#5e3a1a" stroke-width="1.8" fill="none" opacity="0.6"/><path d="M270 251C290 230 330 222 415 228V251Z" fill="#6a4220" opacity="0.45" filter="url(#bl2)"/>
<path d="M175 200C200 205 240 220 265 251H320C300 225 250 205 200 195Z" fill="#bb8a4c" opacity="0.6" filter="url(#bl2)"/><path d="M232 195L300 200L345 215L330 240L270 230Z" fill="#b88a52" opacity="0.45" filter="url(#bl2)"/><path d="M150 205L170 185L190 200L200 251H160Z" fill="#5e3a18" opacity="0.45" filter="url(#bl2)"/><path d="M330 251C345 235 380 225 415 222V251Z" fill="#5a3616" opacity="0.5" filter="url(#bl2)"/><g clip-path="url(#cdirt)"><rect x="0" y="100" width="415" height="151" filter="url(#noise)" opacity="0.5"/><rect x="0" y="100" width="415" height="151" filter="url(#noise2)" opacity="0.28"/></g>
<!-- excavator body -->
<path d="M54 146L58 143H128L149 146V166H54Z" fill="url(#yel)"/>
<path d="M54 161H149V167H54Z" fill="#c79412"/>
<path d="M54 152H108" stroke="#d3a014" stroke-width="0.8"/>
<rect x="57" y="148" width="10.5" height="13.5" fill="#2a2a2a"/>
<path d="M59.5 152.5h4M59.5 157h6" stroke="#e9c650" stroke-width="1.3"/>
<!-- hood -->
<path d="M62.3 143.7L70.2 112.9L88.8 112L80 143.7Z" fill="#2c2c2e"/>
<path d="M68 125L84 124M66 134L82 133" stroke="#4a4a4c" stroke-width="1"/>
<path d="M87 124.3L104.6 142.9" stroke="#4d4d4d" stroke-width="0.9"/>
<!-- cab -->
<path d="M128.5 127H145L148.7 131V163H128.5Z" fill="#e6b21a"/>
<path d="M132 128.7H145L147.9 132V151.7H132Z" fill="#2d2d2d"/>
<path d="M137 131H143V146H137Z" fill="#9a9a9a" opacity="0.6"/>
<!-- boom -->
<path d="M104 146L108 124L117 106L130 93L163 78L202 55L207 50.5L213 53L214 62L200.8 74.9L147 102.3L136 113L129 129L124 150Z" fill="url(#yel)"/><path d="M106 140L112 118L122 102L136 91" stroke="#b8901a" stroke-width="1.5" fill="none"/>
<path d="M135 95L200 58" stroke="#c79914" stroke-width="1.1"/>
<path d="M164 86L180 77" stroke="#1e2747" stroke-width="2.3"/>
<path d="M114 124L124 104" stroke="#b58a12" stroke-width="1"/>
<!-- arm -->
<path d="M202.5 58.2L207.8 50.2L214 52.9V135.8H204.3Z" fill="#e8b31b"/>
<path d="M219.3 88V132.3" stroke="#cfcfcf" stroke-width="1.3"/>
<path d="M211.4 128.7L223.7 133.2L214 144.6" stroke="#dba716" stroke-width="3" fill="none"/>
<!-- bucket -->
<path d="M176 140C177 134 188 132.5 200 133.2L214 136L215 150L209 158.7L198 158.5C186 156 176 149 176 140Z" fill="#8a592b"/>
<path d="M179 137.5C190 134 204 134 213 137" stroke="#a97a4a" stroke-width="2" fill="none"/>
</g></svg>
</div>
<div class="t" style="left:57px;top:850px;font-size:14.8px;line-height:17px;color:#222;text-align:center;width:418px">01.02.Разработка котлована.jpg</div>
<div class="t" style="left:57px;top:867px;font-size:14.8px;line-height:17px;color:#222;text-align:center;width:418px"><b>Автор:</b> Мария Малышева</div>
<div class="t" style="left:57px;top:884px;font-size:14.8px;line-height:17px;color:#222;text-align:center;width:418px"><b>Дата:</b> 23 сентября 2025 17:16</div>
<svg style="left:0;top:0" width="1917" height="907"><path d="M367 235.5H422" stroke="#000" stroke-width="2.8"/><path d="M356 235.5L368 229.7V241.3Z" fill="#000"/><path d="M1464 497.5H1520" stroke="#000" stroke-width="2.8"/><path d="M1453 497.5L1465 491.7V503.3Z" fill="#000"/><path d="M1873.7 606V661" stroke="#000" stroke-width="2.8"/><path d="M1873.7 594.5L1867.9 606.5H1879.5Z" fill="#000"/></svg>
<svg style="left:418.3px;top:213.5px" width="40" height="44" viewBox="0 0 40 44"><ellipse cx="20" cy="22" rx="15.8" ry="17.7" fill="#fff" stroke="#000" stroke-width="3"/></svg>
<div class="t" style="left:418.3px;top:223.5px;width:40px;text-align:center;font-size:20px;line-height:23px;color:#000">1</div>
<svg style="left:1515.5px;top:475.4px" width="40" height="44" viewBox="0 0 40 44"><ellipse cx="20" cy="22" rx="15.8" ry="17.7" fill="#fff" stroke="#000" stroke-width="3"/></svg>
<div class="t" style="left:1515.5px;top:485.4px;width:40px;text-align:center;font-size:20px;line-height:23px;color:#000">2</div>
<svg style="left:1855.4px;top:657.4px" width="40" height="44" viewBox="0 0 40 44"><ellipse cx="20" cy="22" rx="15.8" ry="17.7" fill="#fff" stroke="#000" stroke-width="3"/></svg>
<div class="t" style="left:1855.4px;top:667.4px;width:40px;text-align:center;font-size:20px;line-height:23px;color:#000">3</div>
</body></html>
